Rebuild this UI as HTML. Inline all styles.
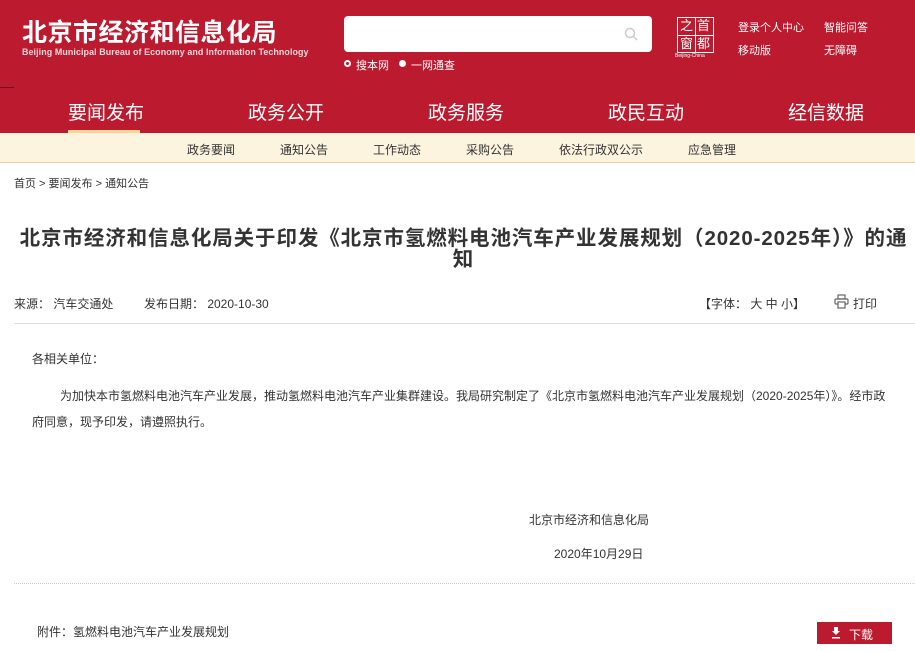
<!DOCTYPE html>
<html><head><meta charset="utf-8"><style>
*{margin:0;padding:0;box-sizing:border-box}
body{width:915px;height:651px;overflow:hidden;background:#fff;font-family:"Liberation Sans","Noto Sans CJK SC",sans-serif;color:#333;position:relative}
.a{position:absolute;white-space:nowrap}
#hdr{position:absolute;left:0;top:0;width:915px;height:133px;background:#bc1b2f}
.nav{font-size:19px;color:#fff;top:98px}
.sub{font-size:12px;color:#333;top:141px}
</style></head><body>
<div id="hdr"></div>
<div class="a" style="left:0;top:87px;width:14px;height:1px;background:#7a0f1c"></div>
<div class="a" style="left:22px;top:13px;font-size:25px;font-weight:bold;color:#fff;letter-spacing:0.5px">北京市经济和信息化局</div>
<div class="a" style="left:22px;top:47px;font-size:8.9px;font-weight:bold;color:#f1d8db;letter-spacing:0.1px">Beijing Municipal Bureau of Economy and Information Technology</div>
<div class="a" style="left:344px;top:16px;width:308px;height:36px;background:#fff;border-radius:4px"></div>
<svg class="a" style="left:624px;top:27px" width="14" height="14" viewBox="0 0 14 14"><circle cx="6" cy="6" r="4.5" fill="none" stroke="#ccc" stroke-width="1.5"/><path d="M9.5 9.5L13 13" stroke="#ccc" stroke-width="1.5"/></svg>
<div class="a" style="left:344px;top:60px;width:7px;height:7px;border:2px solid #fff;border-radius:50%"></div>
<div class="a" style="left:356px;top:57px;font-size:11px;color:#fff">搜本网</div>
<div class="a" style="left:399px;top:60px;width:7px;height:7px;background:#fff;border-radius:50%"></div>
<div class="a" style="left:411px;top:57px;font-size:11px;color:#fff">一网通查</div>
<div class="a" style="left:677px;top:17px;width:37px;height:36px;border:1.5px solid #fff"></div>
<div class="a" style="left:695px;top:17px;width:1px;height:36px;background:#fff"></div>
<div class="a" style="left:677px;top:35px;width:37px;height:1px;background:#fff"></div>
<div class="a" style="left:680px;top:18px;font-size:13px;color:#fff;line-height:16px">之</div>
<div class="a" style="left:697px;top:18px;font-size:13px;color:#fff;line-height:16px">首</div>
<div class="a" style="left:680px;top:36px;font-size:13px;color:#fff;line-height:16px">窗</div>
<div class="a" style="left:697px;top:36px;font-size:13px;color:#fff;line-height:16px">都</div>
<div class="a" style="left:675px;top:53px;font-size:5px;color:#fff">Beijing-China</div>
<div class="a" style="left:738px;top:19px;font-size:11px;color:#fff">登录个人中心</div>
<div class="a" style="left:824px;top:19px;font-size:11px;color:#fff">智能问答</div>
<div class="a" style="left:738px;top:42px;font-size:11px;color:#fff">移动版</div>
<div class="a" style="left:824px;top:42px;font-size:11px;color:#fff">无障碍</div>
<div class="a nav" style="left:68px">要闻发布</div>
<div class="a" style="left:68px;top:130px;width:72px;height:3px;background:#f9d593"></div>
<div class="a nav" style="left:248px">政务公开</div>
<div class="a nav" style="left:428px">政务服务</div>
<div class="a nav" style="left:608px">政民互动</div>
<div class="a nav" style="left:788px">经信数据</div>
<div class="a" style="left:0;top:133px;width:915px;height:30px;background:#fdf4df;border-bottom:1px solid #f2cf9a"></div>
<div class="a sub" style="left:187px">政务要闻</div>
<div class="a sub" style="left:280px">通知公告</div>
<div class="a sub" style="left:373px">工作动态</div>
<div class="a sub" style="left:466px">采购公告</div>
<div class="a sub" style="left:559px">依法行政双公示</div>
<div class="a sub" style="left:688px">应急管理</div>
<div class="a" style="left:14px;top:175px;font-size:11px;color:#333">首页 &gt; 要闻发布 &gt; 通知公告</div>
<div class="a" style="left:0;top:228px;width:915px;text-align:center;font-size:20.5px;font-weight:bold;color:#333;line-height:21px;letter-spacing:0.9px;padding:0 0 0 12px">北京市经济和信息化局关于印发《北京市氢燃料电池汽车产业发展规划（2020-2025年）》的通<br>知</div>
<div class="a" style="left:14px;top:295px;font-size:12px;color:#333">来源：&nbsp;汽车交通处</div>
<div class="a" style="left:144px;top:295px;font-size:12px;color:#333">发布日期：&nbsp;2020-10-30</div>
<div class="a" style="left:699px;top:295px;font-size:12px;color:#333">【字体：&nbsp;大 中 小】</div>
<svg class="a" style="left:834px;top:294px" width="15" height="15" viewBox="0 0 15 15"><rect x="4" y="1" width="7" height="4" fill="none" stroke="#666" stroke-width="1.2"/><rect x="1" y="5" width="13" height="5" rx="1" fill="none" stroke="#666" stroke-width="1.2"/><rect x="4" y="8" width="7" height="6" fill="#fff" stroke="#666" stroke-width="1.2"/></svg>
<div class="a" style="left:853px;top:295px;font-size:12px;color:#333">打印</div>
<div class="a" style="left:14px;top:323px;width:901px;height:1px;background:#ddd"></div>
<div class="a" style="left:32px;top:350px;font-size:12px;color:#333">各相关单位：</div>
<div class="a" style="left:32px;top:383px;width:862px;font-size:12px;color:#333;line-height:26px;white-space:normal;text-indent:28px">为加快本市氢燃料电池汽车产业发展，推动氢燃料电池汽车产业集群建设。我局研究制定了《北京市氢燃料电池汽车产业发展规划（2020-2025年）》。经市政府同意，现予印发，请遵照执行。</div>
<div class="a" style="left:529px;top:511px;font-size:12px;color:#333">北京市经济和信息化局</div>
<div class="a" style="left:554px;top:545px;font-size:12px;color:#333">2020年10月29日</div>
<div class="a" style="left:14px;top:583px;width:901px;border-top:1px dotted #ccc"></div>
<div class="a" style="left:37px;top:623px;font-size:12px;color:#333">附件：氢燃料电池汽车产业发展规划</div>
<div class="a" style="left:817px;top:622px;width:75px;height:22px;background:#bc1b2f"></div>
<svg class="a" style="left:831px;top:627px" width="10" height="12" viewBox="0 0 10 12"><path d="M3 0h4v4h2L5 8 1 4h2z" fill="#fff"/><rect x="1" y="10" width="8" height="1.5" fill="#fff"/></svg>
<div class="a" style="left:849px;top:626px;font-size:12px;color:#fff">下载</div>
</body></html>
